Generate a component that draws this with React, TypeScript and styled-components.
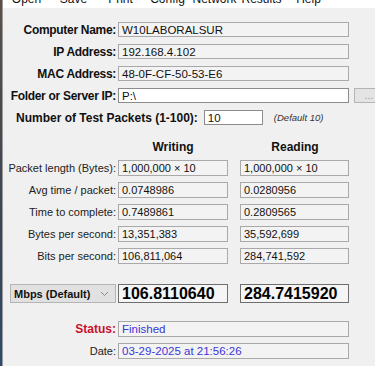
import styled, { createGlobalStyle } from "styled-components";

const GlobalStyle = createGlobalStyle`
  html, body {
    margin: 0;
    padding: 0;
    background: #f0f0f0;
  }
  * {
    box-sizing: border-box;
  }
`;

const menuItems = ["Open", "Save", "Print", "Config", "Network", "Results", "Help"];

const infoRows = [
  { label: "Computer Name:", value: "W10LABORALSUR" },
  { label: "IP Address:", value: "192.168.4.102" },
  { label: "MAC Address:", value: "48-0F-CF-50-53-E6" },
];

const resultRows = [
  { label: "Packet length (Bytes):", writing: "1,000,000 × 10", reading: "1,000,000 × 10" },
  { label: "Avg time / packet:", writing: "0.0748986", reading: "0.0280956" },
  { label: "Time to complete:", writing: "0.7489861", reading: "0.2809565" },
  { label: "Bytes per second:", writing: "13,351,383", reading: "35,592,699" },
  { label: "Bits per second:", writing: "106,811,064", reading: "284,741,592" },
];

export default function App() {
  return (
    <>
      <GlobalStyle />
      <Screen>
        <DesktopEdge />
        <Window>
          <MenuBar>
            {menuItems.map((item) => (
              <MenuItem key={item}>{item}</MenuItem>
            ))}
          </MenuBar>

          <Panel>
            <InfoGrid>
              {infoRows.map((row) => (
                <Row key={row.label}>
                  <BoldLabel>{row.label}</BoldLabel>
                  <Field>{row.value}</Field>
                </Row>
              ))}
              <Row>
                <BoldLabel>Folder or Server IP:</BoldLabel>
                <Field $editable>P:\</Field>
                <BrowseButton>...</BrowseButton>
              </Row>
            </InfoGrid>

            <PacketsRow>
              <BoldLabel>Number of Test Packets (1-100):</BoldLabel>
              <PacketsField $editable>10</PacketsField>
              <Hint>(Default 10)</Hint>
            </PacketsRow>

            <HeaderRow>
              <Spacer />
              <ColumnTitle>Writing</ColumnTitle>
              <ColumnTitle>Reading</ColumnTitle>
            </HeaderRow>

            <ResultList>
              {resultRows.map((row) => (
                <ResultRow key={row.label}>
                  <Label>{row.label}</Label>
                  <Field>{row.writing}</Field>
                  <Field>{row.reading}</Field>
                </ResultRow>
              ))}
            </ResultList>

            <SpeedRow>
              <UnitSelect>
                <span>Mbps (Default)</span>
                <svg width="9" height="6" viewBox="0 0 9 6">
                  <path d="M1 1 L4.5 4.5 L8 1" fill="none" stroke="#8a8a8a" strokeWidth="1" />
                </svg>
              </UnitSelect>
              <BigField>106.8110640</BigField>
              <BigField>284.7415920</BigField>
            </SpeedRow>

            <StatusList>
              <Row>
                <StatusLabel>Status:</StatusLabel>
                <Field $blue>Finished</Field>
              </Row>
              <Row>
                <Label>Date:</Label>
                <Field $blue>03-29-2025 at 21:56:26</Field>
              </Row>
            </StatusList>
          </Panel>
        </Window>
      </Screen>
    </>
  );
}

const Screen = styled.div`
  display: flex;
  width: 375px;
  height: 366px;
  overflow: hidden;
  font-family: "Liberation Sans", Arial, sans-serif;
  color: #000;
`;

const DesktopEdge = styled.div`
  flex: 0 0 3px;
  background: linear-gradient(#5a5048, #3b4654 60%, #2c4a6e);
  border-right: 1px solid #9a9a9a;
`;

const Window = styled.div`
  flex: 1;
  display: flex;
  flex-direction: column;
  background: #f0f0f0;
  min-width: 0;
`;

const MenuBar = styled.div`
  display: flex;
  height: 8px;
  overflow: hidden;
  background: #fff;
  flex-shrink: 0;
`;

const MenuItem = styled.div`
  flex: 0 0 47px;
  text-align: center;
  font-size: 12px;
  line-height: 14px;
  margin-top: -8px;
  color: #111;
`;

const Panel = styled.div`
  display: flex;
  flex-direction: column;
  padding-top: 14px;
`;

const InfoGrid = styled.div`
  display: flex;
  flex-direction: column;
  gap: 7px;
`;

const Row = styled.div`
  display: flex;
  align-items: center;
  height: 15px;
`;

const BoldLabel = styled.div`
  flex: 0 0 113px;
  margin-right: 2px;
  text-align: right;
  font-size: 12px;
  font-weight: bold;
  letter-spacing: -0.3px;
  white-space: nowrap;
  color: #111;
`;

const Label = styled.div`
  flex: 0 0 113px;
  margin-right: 2px;
  text-align: right;
  font-size: 11px;
  white-space: nowrap;
  color: #222;
`;

const StatusLabel = styled(BoldLabel)`
  color: #c8102e;
  letter-spacing: 0;
`;

const Field = styled.div<{ $editable?: boolean; $blue?: boolean }>`
  flex: 0 0 231px;
  height: 100%;
  padding: 0 3px;
  display: flex;
  align-items: center;
  font-size: 11.5px;
  white-space: nowrap;
  overflow: hidden;
  background: ${(p) => (p.$editable ? "#fff" : "#f3f3f3")};
  border: 1px solid ${(p) => (p.$editable ? "#8c8c8c" : "#a9a9a9")};
  color: ${(p) => (p.$blue ? "#3a36d6" : "#111")};
`;

const BrowseButton = styled.div`
  flex: 0 0 30px;
  height: 100%;
  margin-left: 5px;
  display: flex;
  align-items: center;
  justify-content: center;
  font-size: 10px;
  color: #9a9a9a;
  background: #e4e4e4;
  border: 1px solid #b5b5b5;
`;

const PacketsRow = styled.div`
  display: flex;
  align-items: center;
  height: 15px;
  margin-top: 7px;
  padding-left: 13px;

  ${BoldLabel} {
    flex: none;
    letter-spacing: 0;
    margin-right: 6px;
  }
`;

const PacketsField = styled(Field)`
  flex: 0 0 59px;
`;

const Hint = styled.div`
  margin-left: 11px;
  font-size: 9.5px;
  font-style: italic;
  color: #333;
`;

const HeaderRow = styled.div`
  display: flex;
  align-items: center;
  height: 14px;
  margin-top: 15px;
`;

const Spacer = styled.div`
  flex: 0 0 115px;
`;

const ColumnTitle = styled.div`
  flex: 0 0 110px;
  margin-right: 12px;
  text-align: center;
  font-size: 12px;
  font-weight: bold;
  color: #111;
`;

const ResultList = styled.div`
  display: flex;
  flex-direction: column;
  gap: 6px;
  margin-top: 6px;
`;

const ResultRow = styled.div`
  display: flex;
  align-items: center;
  height: 16px;

  ${Field} {
    flex: 0 0 110px;
    font-size: 11px;
  }
  ${Field} + ${Field} {
    flex-basis: 109px;
    margin-left: 12px;
  }
`;

const SpeedRow = styled.div`
  display: flex;
  align-items: center;
  height: 19px;
  margin-top: 20px;
`;

const UnitSelect = styled.div`
  flex: 0 0 106px;
  height: 100%;
  margin-left: 7px;
  margin-right: 2px;
  padding: 0 6px 0 3px;
  display: flex;
  align-items: center;
  justify-content: space-between;
  font-size: 11px;
  font-weight: bold;
  color: #111;
  background: #e1e1e1;
  border: 1px solid #b4b4b4;
`;

const BigField = styled.div`
  flex: 0 0 110px;
  height: 100%;
  padding: 0 3px;
  display: flex;
  align-items: center;
  font-size: 16px;
  font-weight: bold;
  color: #000;
  background: #f5f5f5;
  border: 1px solid #6e6e6e;

  & + & {
    flex-basis: 109px;
    margin-left: 12px;
  }
`;

const StatusList = styled.div`
  display: flex;
  flex-direction: column;
  gap: 6px;
  margin-top: 18px;

  ${Row} {
    height: 16px;
  }
`;
